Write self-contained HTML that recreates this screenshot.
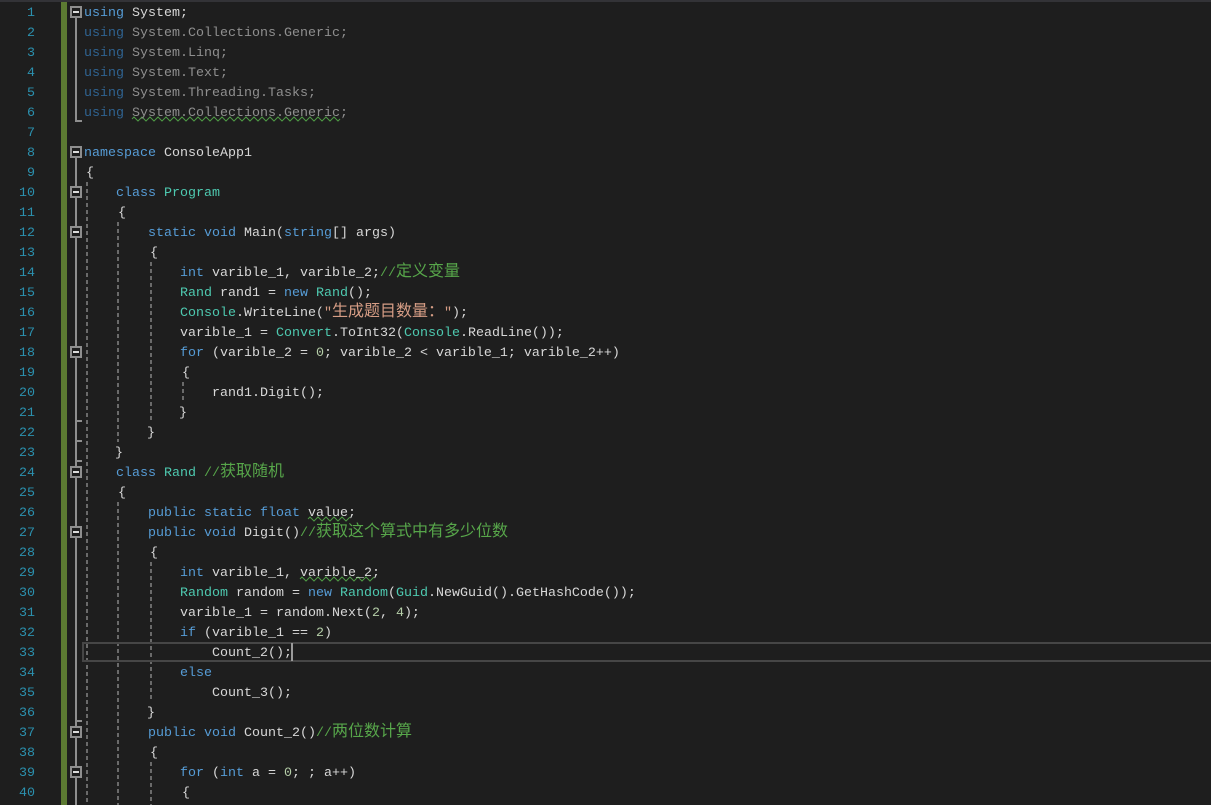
<!DOCTYPE html>
<html><head><meta charset="utf-8">
<style>
html,body{margin:0;padding:0;background:#1e1e1e;}
#r{position:relative;width:1211px;height:805px;overflow:hidden;background:#1e1e1e;font-family:"Liberation Mono","Noto Sans CJK SC",monospace;font-size:13.333px;color:#d8d8d8;}
#top{position:absolute;left:0;top:0;width:1211px;height:2px;background:#333337;}
#bar{position:absolute;left:61px;top:2px;width:6px;height:803px;background:#5c7a32;}
svg{position:absolute;left:0;top:0;}
#nums{position:absolute;left:0;top:4px;width:35px;text-align:right;color:#2b91af;}
#nums div{height:20px;line-height:20px;}
#code{position:absolute;left:84px;top:4px;width:1127px;}
#code div{height:20px;line-height:20px;white-space:pre;}
.k{color:#569cd6}.t{color:#4ec9b0}.c{color:#57a64a}.s{color:#d69d85}.n{color:#b5cea8}
.z{font-size:16px;line-height:0;font-family:"Noto Sans CJK SC",sans-serif;}
.f{color:#8f8f8f}.f .k{color:#2f6391}
.o{position:relative;left:2px}.e{position:relative;left:-1px}
</style></head><body>
<div id="r">
<div id="top"></div>
<div id="bar"></div>
<svg width="1211" height="805" viewBox="0 0 1211 805">
<g stroke="#6a6a6a" stroke-width="2" fill="none" stroke-dasharray="4 3">
<path d="M87 182V805"/>
<path d="M118 222V442M118 502V805"/>
<path d="M151 262V422M151 562V702M151 762V805"/>
<path d="M183 382V402"/>
</g>
<rect x="83" y="643" width="1130" height="18" fill="none" stroke="#464646" stroke-width="2"/>
<rect x="291" y="643" width="2" height="18" fill="#9a9a9a"/>
<g stroke="#8e8e8e" stroke-width="2" fill="none">
<path d="M76 18V121H82"/>
<path d="M76 158V805"/>
<path d="M76 421H82M76 441H82M76 461H82M76 721H82"/>
</g>
<g fill="#1e1e1e" stroke="#8e8e8e" stroke-width="2">
<rect x="71" y="7" width="10" height="10"/>
<rect x="71" y="147" width="10" height="10"/>
<rect x="71" y="187" width="10" height="10"/>
<rect x="71" y="227" width="10" height="10"/>
<rect x="71" y="347" width="10" height="10"/>
<rect x="71" y="467" width="10" height="10"/>
<rect x="71" y="527" width="10" height="10"/>
<rect x="71" y="727" width="10" height="10"/>
<rect x="71" y="767" width="10" height="10"/>
</g>
<g stroke="#dcdcdc" stroke-width="2">
<path d="M73 12H79M73 152H79M73 192H79M73 232H79M73 352H79M73 472H79M73 532H79M73 732H79M73 772H79"/>
</g>
<g fill="none" stroke="#4f9a45" stroke-width="1">
<path d="M132 119l2-2 2 2 2 2 2-2 2-2 2 2 2 2 2-2 2-2 2 2 2 2 2-2 2-2 2 2 2 2 2-2 2-2 2 2 2 2 2-2 2-2 2 2 2 2 2-2 2-2 2 2 2 2 2-2 2-2 2 2 2 2 2-2 2-2 2 2 2 2 2-2 2-2 2 2 2 2 2-2 2-2 2 2 2 2 2-2 2-2 2 2 2 2 2-2 2-2 2 2 2 2 2-2 2-2 2 2 2 2 2-2 2-2 2 2 2 2 2-2 2-2 2 2 2 2 2-2 2-2 2 2 2 2 2-2 2-2 2 2 2 2 2-2 2-2 2 2 2 2 2-2 2-2 2 2 2 2 2-2 2-2 2 2 2 2 2-2 2-2 2 2 2 2 2-2 2-2 2 2 2 2 2-2 2-2 2 2 2 2 2-2 2-2 2 2 2 2 2-2 2-2 2 2 2 2 2-2"/>
<path d="M308 519l2-2 2 2 2 2 2-2 2-2 2 2 2 2 2-2 2-2 2 2 2 2 2-2 2-2 2 2 2 2 2-2 2-2 2 2 2 2 2-2 2-2"/>
<path d="M300 579l2-2 2 2 2 2 2-2 2-2 2 2 2 2 2-2 2-2 2 2 2 2 2-2 2-2 2 2 2 2 2-2 2-2 2 2 2 2 2-2 2-2 2 2 2 2 2-2 2-2 2 2 2 2 2-2 2-2 2 2 2 2 2-2 2-2 2 2 2 2 2-2 2-2"/>
</g>
</svg>
<div id="nums">
<div>1</div><div>2</div><div>3</div><div>4</div><div>5</div><div>6</div><div>7</div><div>8</div><div>9</div><div>10</div>
<div>11</div><div>12</div><div>13</div><div>14</div><div>15</div><div>16</div><div>17</div><div>18</div><div>19</div><div>20</div>
<div>21</div><div>22</div><div>23</div><div>24</div><div>25</div><div>26</div><div>27</div><div>28</div><div>29</div><div>30</div>
<div>31</div><div>32</div><div>33</div><div>34</div><div>35</div><div>36</div><div>37</div><div>38</div><div>39</div><div>40</div>
</div>
<div id="code">
<div><span class="k">using</span> System;</div>
<div class="f"><span class="k">using</span> System.Collections.Generic;</div>
<div class="f"><span class="k">using</span> System.Linq;</div>
<div class="f"><span class="k">using</span> System.Text;</div>
<div class="f"><span class="k">using</span> System.Threading.Tasks;</div>
<div class="f"><span class="k">using</span> System.Collections.Generic;</div>
<div></div>
<div><span class="k">namespace</span> ConsoleApp1</div>
<div><span class="o">{</span></div>
<div>    <span class="k">class</span> <span class="t">Program</span></div>
<div>    <span class="o">{</span></div>
<div>        <span class="k">static</span> <span class="k">void</span> Main(<span class="k">string</span>[] args)</div>
<div>        <span class="o">{</span></div>
<div>            <span class="k">int</span> varible_1, varible_2;<span class="c">//<span class="z">定义变量</span></span></div>
<div>            <span class="t">Rand</span> rand1 = <span class="k">new</span> <span class="t">Rand</span>();</div>
<div>            <span class="t">Console</span>.WriteLine(<span class="s">"<span class="z">生成题目数量：</span>"</span>);</div>
<div>            varible_1 = <span class="t">Convert</span>.ToInt32(<span class="t">Console</span>.ReadLine());</div>
<div>            <span class="k">for</span> (varible_2 = <span class="n">0</span>; varible_2 &lt; varible_1; varible_2++)</div>
<div>            <span class="o">{</span></div>
<div>                rand1.Digit();</div>
<div>            <span class="e">}</span></div>
<div>        <span class="e">}</span></div>
<div>    <span class="e">}</span></div>
<div>    <span class="k">class</span> <span class="t">Rand</span> <span class="c">//<span class="z">获取随机</span></span></div>
<div>    <span class="o">{</span></div>
<div>        <span class="k">public</span> <span class="k">static</span> <span class="k">float</span> value;</div>
<div>        <span class="k">public</span> <span class="k">void</span> Digit()<span class="c">//<span class="z">获取这个算式中有多少位数</span></span></div>
<div>        <span class="o">{</span></div>
<div>            <span class="k">int</span> varible_1, varible_2;</div>
<div>            <span class="t">Random</span> random = <span class="k">new</span> <span class="t">Random</span>(<span class="t">Guid</span>.NewGuid().GetHashCode());</div>
<div>            varible_1 = random.Next(<span class="n">2</span>, <span class="n">4</span>);</div>
<div>            <span class="k">if</span> (varible_1 == <span class="n">2</span>)</div>
<div>                Count_2();</div>
<div>            <span class="k">else</span></div>
<div>                Count_3();</div>
<div>        <span class="e">}</span></div>
<div>        <span class="k">public</span> <span class="k">void</span> Count_2()<span class="c">//<span class="z">两位数计算</span></span></div>
<div>        <span class="o">{</span></div>
<div>            <span class="k">for</span> (<span class="k">int</span> a = <span class="n">0</span>; ; a++)</div>
<div>            <span class="o">{</span></div>
</div>
</div>
</body></html>
